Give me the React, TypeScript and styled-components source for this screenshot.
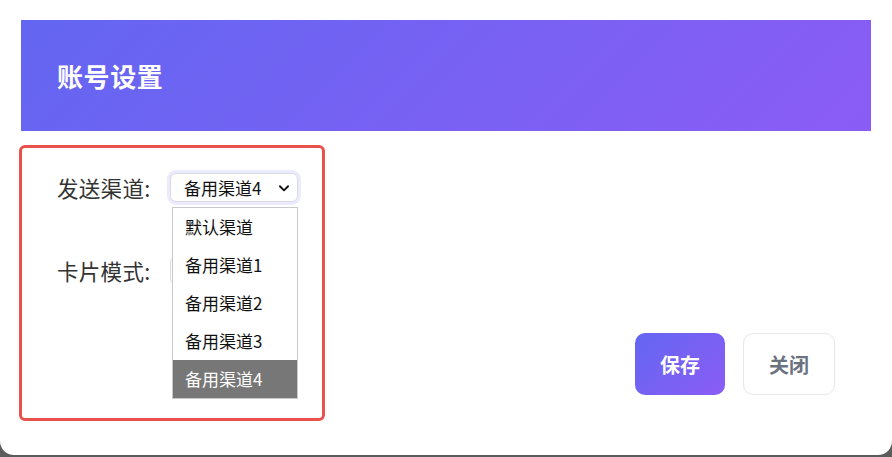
import React from "react";
import styled, { createGlobalStyle } from "styled-components";

const Global = createGlobalStyle`
  html, body { margin: 0; padding: 0; }
  body {
    background: #5c5c5c;
    font-family: "Noto Sans CJK SC", "Noto Sans", "Liberation Sans", sans-serif;
    width: 892px;
    height: 457px;
    overflow: hidden;
  }
`;

const Modal = styled.div`
  box-sizing: border-box;
  width: 892px;
  height: 455px;
  background: #ffffff;
  border-radius: 0 0 14px 14px;
  padding: 20px 21px 0 19px;
`;

const Header = styled.div`
  height: 111px;
  margin-left: 2px;
  background: linear-gradient(135deg, #6366f1 0%, #8b5cf6 100%);
  display: flex;
  align-items: center;
  padding-left: 36px;
`;

const Title = styled.h2`
  margin: 0;
  color: #ffffff;
  font-size: 26px;
  font-weight: 700;
  letter-spacing: 0.6px;
`;

const Body = styled.div`
  display: flex;
  margin-top: 14px;
`;

const Highlight = styled.div`
  position: relative;
  box-sizing: border-box;
  width: 306px;
  height: 276px;
  border: 3px solid #e8524a;
  border-radius: 6px;
  padding: 24px 0 0 35px;
  display: flex;
  flex-direction: column;
  gap: 52px;
`;

const Row = styled.div`
  display: flex;
  align-items: center;
  gap: 10px;
`;

const Label = styled.span`
  font-size: 21.5px;
  color: #333333;
  width: 103px;
  white-space: nowrap;
  letter-spacing: 0.3px;
`;

const SelectBox = styled.div<{ $focused?: boolean }>`
  box-sizing: border-box;
  width: 128px;
  height: 29px;
  border: 1px solid #d9dbe3;
  border-radius: 6px;
  background: #fff;
  box-shadow: ${(p) => (p.$focused ? "0 0 0 3px #ebebfd" : "none")};
  display: flex;
  align-items: center;
  justify-content: space-between;
  padding: 0 6px 0 13px;
  font-size: 17px;
  color: #111;
`;

const Chevron = styled.svg`
  width: 14px;
  height: 14px;
`;

const Menu = styled.ul`
  position: absolute;
  left: 150px;
  top: 59px;
  box-sizing: border-box;
  width: 126px;
  margin: 0;
  padding: 0;
  list-style: none;
  background: #fff;
  border: 1px solid #c9c9c9;
`;

const Option = styled.li<{ $active?: boolean }>`
  height: 38px;
  line-height: 38px;
  padding-left: 12px;
  font-size: 17px;
  color: ${(p) => (p.$active ? "#ffffff" : "#111111")};
  background: ${(p) => (p.$active ? "#777777" : "transparent")};
`;

const Actions = styled.div`
  flex: 1;
  display: flex;
  justify-content: flex-end;
  gap: 18px;
  padding-right: 36px;
  margin-top: 188px;
  align-self: flex-start;
`;

const Button = styled.button<{ $primary?: boolean }>`
  box-sizing: border-box;
  height: 62px;
  width: ${(p) => (p.$primary ? "90px" : "92px")};
  border-radius: 10px;
  font-family: inherit;
  font-size: 20px;
  font-weight: 700;
  cursor: pointer;
  border: ${(p) => (p.$primary ? "none" : "1px solid #e5e7eb")};
  background: ${(p) =>
    p.$primary ? "linear-gradient(135deg, #6366f1 0%, #8b5cf6 100%)" : "#ffffff"};
  color: ${(p) => (p.$primary ? "#ffffff" : "#6b7280")};
`;

const options = ["默认渠道", "备用渠道1", "备用渠道2", "备用渠道3", "备用渠道4"];

export default function App() {
  return (
    <>
      <Global />
      <Modal>
        <Header>
          <Title>账号设置</Title>
        </Header>
        <Body>
          <Highlight>
            <Row>
              <Label>发送渠道:</Label>
              <SelectBox $focused>
                <span>备用渠道4</span>
                <Chevron viewBox="0 0 24 24" fill="none" stroke="#111" strokeWidth="3.2" strokeLinecap="round" strokeLinejoin="round">
                  <path d="M5 9l7 7 7-7" />
                </Chevron>
              </SelectBox>
            </Row>
            <Row>
              <Label>卡片模式:</Label>
              <SelectBox />
            </Row>
            <Menu>
              {options.map((o) => (
                <Option key={o} $active={o === "备用渠道4"}>
                  {o}
                </Option>
              ))}
            </Menu>
          </Highlight>
          <Actions>
            <Button $primary>保存</Button>
            <Button>关闭</Button>
          </Actions>
        </Body>
      </Modal>
    </>
  );
}
